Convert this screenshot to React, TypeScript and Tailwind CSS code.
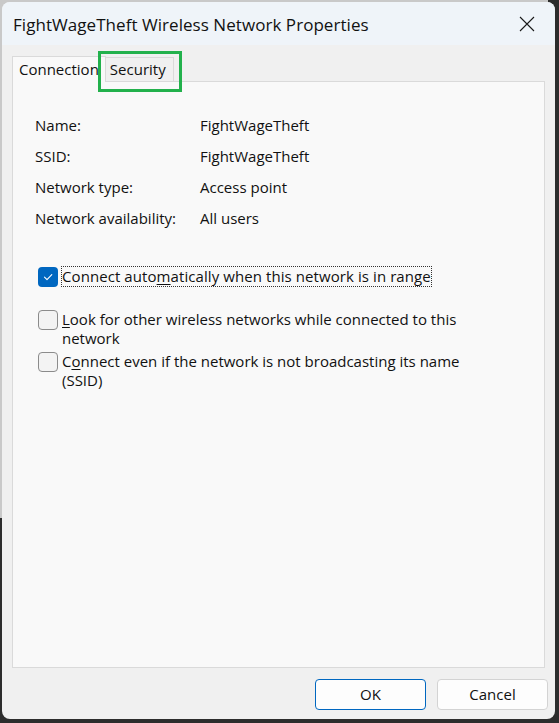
import React from 'react';

const font = { fontFamily: '"Segoe UI", "Open Sans", sans-serif' };

const CheckBox: React.FC<{ checked?: boolean }> = ({ checked }) =>
  checked ? (
    <div className="w-[20px] h-[20px] shrink-0 rounded-[4px] bg-[#0067c0] flex items-center justify-center">
      <svg width="12" height="12" viewBox="0 0 12 12" fill="none">
        <path d="M2.5 6.2 L5 8.6 L9.8 3.6" stroke="#ffffff" strokeWidth="1.1" strokeLinecap="round" strokeLinejoin="round" />
      </svg>
    </div>
  ) : (
    <div className="w-[20px] h-[20px] shrink-0 rounded-[4px] bg-[#f3f3f3] border border-[#8b8b8b]" />
  );

const App: React.FC = () => {
  const info = [
    { label: 'Name:', value: 'FightWageTheft' },
    { label: 'SSID:', value: 'FightWageTheft' },
    { label: 'Network type:', value: 'Access point' },
    { label: 'Network availability:', value: 'All users' }
  ];

  return (
    <div className="relative w-[559px] h-[723px] bg-[#2c2c2c] overflow-hidden text-[#111]" style={font}>
      {/* desktop behind the dialog */}
      <div className="absolute left-0 top-0 w-[548px] h-[518px] bg-[#c9c9c9]" />

      {/* dialog window */}
      <div className="absolute left-[2px] top-[2px] w-[553px] h-[717px] rounded-[8px] overflow-hidden bg-[#f0f0f0] flex flex-col">
        {/* title bar */}
        <div className="h-[43px] shrink-0 bg-[#eff4f9] flex items-center justify-between pl-[11px]">
          <span className="text-[17px] leading-none pt-[1px] tracking-[0.05px]">FightWageTheft Wireless Network Properties</span>
          <div className="w-[46px] h-[43px] flex items-center justify-center mr-[5px] pt-[1px]">
            <svg width="16" height="16" viewBox="0 0 16 16" fill="none">
              <path d="M1 1 L15 15 M15 1 L1 15" stroke="#1a1a1a" strokeWidth="1.1" />
            </svg>
          </div>
        </div>

        {/* tabs + page */}
        <div className="relative px-[10px] pt-[11px] flex flex-col">
          <div className="flex items-end h-[25px] text-[15px]">
            <div className="relative z-10 h-[26px] mb-[-1px] px-[6px] bg-[#f9f9f9] border-l border-t border-r border-[#dadada] flex items-center">
              Connection
            </div>
            <div className="h-[24px] w-[68px] bg-[#f0f0f0] border-t border-r border-[#dadada] flex items-center pl-[4px]">
              Security
            </div>
          </div>

          {/* highlight box */}
          <div className="absolute left-[96px] top-[6px] w-[84px] h-[41px] border-[3px] border-[#22b14c] z-20" />

          <div className="h-[587px] bg-[#f9f9f9] border border-[#dadada] pt-[28px] pl-[22px] text-[15px]">
            <div className="grid grid-cols-[165px_1fr]">
              {info.map((row) => (
                <React.Fragment key={row.label}>
                  <div className="h-[31px] flex items-center">{row.label}</div>
                  <div className="h-[31px] flex items-center">{row.value}</div>
                </React.Fragment>
              ))}
            </div>

            <div className="mt-[32px] flex items-start pl-[3px] gap-[3px]">
              <div className="mt-[1px]">
                <CheckBox checked />
              </div>
              <div className="border border-dotted border-[#333] leading-[19px] tracking-[0.08px]">
                Connect auto<span className="underline underline-offset-2">m</span>atically when this network is in range
              </div>
            </div>

            <div className="mt-[23px] flex items-start pl-[3px] gap-[4px]">
              <CheckBox />
              <div className="w-[410px] leading-[19px]">
                <span className="underline underline-offset-2">L</span>ook for other wireless networks while connected to this network
              </div>
            </div>

            <div className="mt-[4px] flex items-start pl-[3px] gap-[4px]">
              <CheckBox />
              <div className="w-[410px] leading-[19px]">
                C<span className="underline underline-offset-2">o</span>nnect even if the network is not broadcasting its name (SSID)
              </div>
            </div>
          </div>
        </div>

        {/* buttons */}
        <div className="flex justify-end gap-[11px] pr-[7px] mt-[11px] text-[15px]">
          <button className="w-[111px] h-[31px] rounded-[4px] bg-[#fdfdfd] border border-[#0067c0]">OK</button>
          <button className="w-[111px] h-[31px] rounded-[4px] bg-[#fdfdfd] border border-[#d3d3d3]">Cancel</button>
        </div>
      </div>
    </div>
  );
};

export default App;
